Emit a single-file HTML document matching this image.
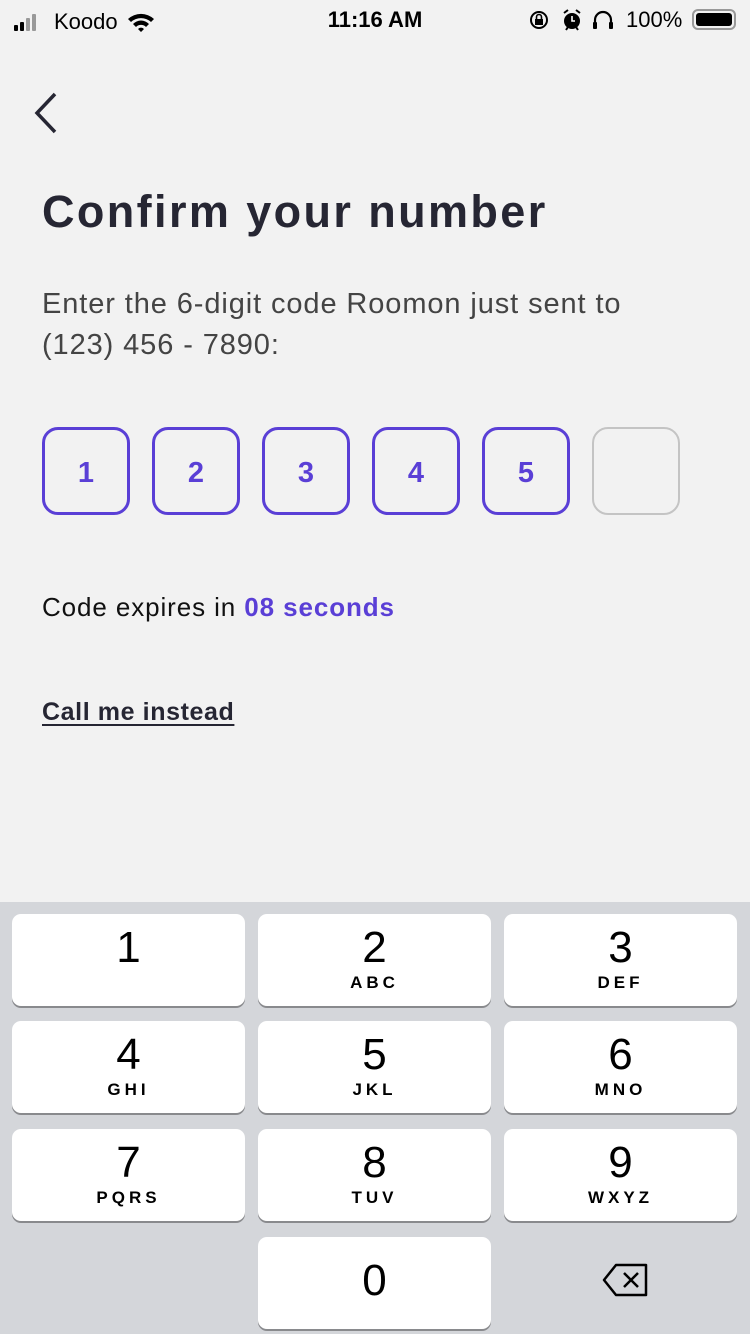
<!DOCTYPE html>
<html><head><meta charset="utf-8"><style>
*{margin:0;padding:0;box-sizing:border-box}
body{width:750px;height:1334px;background:#f2f2f2;font-family:"Liberation Sans",sans-serif;position:relative;overflow:hidden;color:#262633}
.a{position:absolute}
.box{position:absolute;top:427px;width:88px;height:88px;border:3px solid #5a3fd6;border-radius:16px;color:#5a3fd6;font-weight:bold;font-size:29px;text-align:center;line-height:86px}
.kb{position:absolute;left:0;top:902px;width:750px;height:432px;background:#d4d6da}
.k{position:absolute;width:233px;height:92px;background:#fff;border-radius:9px;box-shadow:0 2px 0 #898a8d;text-align:center;color:#000}
.k .n{font-size:44px;line-height:44px;margin-top:12px;display:block}
.k .l{font-size:17px;font-weight:bold;letter-spacing:4px;display:block;margin-top:3px}
</style></head><body>
<div class="a" style="left:14px;top:9px;font-size:22px;color:#000;display:flex;align-items:center">
<svg width="36" height="18"><rect x="0" y="12" width="4" height="6" rx="1" fill="#000"/><rect x="6" y="9" width="4" height="9" rx="1" fill="#000"/><rect x="12" y="5" width="4" height="13" rx="1" fill="#999"/><rect x="18" y="1" width="4" height="17" rx="1" fill="#999"/></svg>
<span style="margin-left:4px">Koodo</span>
<svg width="30" height="22" style="margin-left:8px" viewBox="0 0 30 22"><path d="M2 8a19 19 0 0 1 26 0l-3 3a15 15 0 0 0-20 0z M7 13a11 11 0 0 1 16 0l-3 3a7 7 0 0 0-10 0z M12 18a4 4 0 0 1 6 0l-3 3z" fill="#000"/></svg>
</div>
<div class="a" style="left:0;width:750px;top:7px;text-align:center;font-size:22px;font-weight:bold;color:#000">11:16 AM</div>
<svg class="a" style="left:528px;top:8px" width="100" height="24" viewBox="0 0 100 24">
<circle cx="11" cy="12" r="8" stroke="#000" stroke-width="2" fill="none"/><rect x="7" y="11" width="8" height="6" fill="#000"/><path d="M8.5 11v-2a2.5 2.5 0 0 1 5 0v2" stroke="#000" stroke-width="1.6" fill="none"/>
<circle cx="44" cy="13" r="8" fill="#000"/><path d="M36 5l4-3M52 5l-4-3M38 22l2-3M50 22l-2-3" stroke="#000" stroke-width="2"/><path d="M44 8v5h3" stroke="#fff" stroke-width="1.6" fill="none"/>
<path d="M67 20v-8a8 8 0 0 1 16 0v8" stroke="#000" stroke-width="2.2" fill="none"/><rect x="65" y="14" width="4" height="7" rx="1" fill="#000"/><rect x="81" y="14" width="4" height="7" rx="1" fill="#000"/>
</svg>
<div class="a" style="left:626px;top:7px;font-size:22px;color:#000">100%</div>
<div class="a" style="left:692px;top:9px;width:44px;height:21px;border:2px solid #999;border-radius:6px;padding:2px"><div style="background:#000;height:100%;border-radius:3px"></div></div>
<svg class="a" style="left:30px;top:92px" width="30" height="42"><path d="M25 2L7 21l18 19" stroke="#262633" stroke-width="3.5" fill="none"/></svg>
<div class="a" style="left:42px;top:186px;font-size:45px;font-weight:900;letter-spacing:2.4px">Confirm your number</div>
<div class="a" style="left:42px;top:284px;font-size:29px;line-height:41px;color:#444;letter-spacing:0.9px">Enter the 6-digit code Roomon just sent to<br>(123) 456 - 7890:</div>
<div class="box" style="left:42px">1</div><div class="box" style="left:152px">2</div><div class="box" style="left:262px">3</div><div class="box" style="left:372px">4</div><div class="box" style="left:482px">5</div>
<div class="box" style="left:592px;border:2px solid #c4c4c4"></div>
<div class="a" style="left:42px;top:592px;font-size:26px;color:#111;letter-spacing:0.9px">Code expires in <b style="color:#5a3fd6">08 seconds</b></div>
<div class="a" style="left:42px;top:698px;font-size:25px;font-weight:bold;text-decoration:underline;text-underline-offset:4px;letter-spacing:0.6px">Call me instead</div>
<div class="kb"></div>
<div class="k" style="left:12px;top:914px"><span class="n">1</span></div>
<div class="k" style="left:258px;top:914px"><span class="n">2</span><span class="l">ABC</span></div>
<div class="k" style="left:504px;top:914px"><span class="n">3</span><span class="l">DEF</span></div>
<div class="k" style="left:12px;top:1021px"><span class="n">4</span><span class="l">GHI</span></div>
<div class="k" style="left:258px;top:1021px"><span class="n">5</span><span class="l">JKL</span></div>
<div class="k" style="left:504px;top:1021px"><span class="n">6</span><span class="l">MNO</span></div>
<div class="k" style="left:12px;top:1129px"><span class="n">7</span><span class="l">PQRS</span></div>
<div class="k" style="left:258px;top:1129px"><span class="n">8</span><span class="l">TUV</span></div>
<div class="k" style="left:504px;top:1129px"><span class="n">9</span><span class="l">WXYZ</span></div>
<div class="k" style="left:258px;top:1237px"><span class="n" style="margin-top:22px">0</span></div>
<svg class="a" style="left:602px;top:1263px" width="48" height="34"><path d="M14 2h30v30H14L2 17z" stroke="#000" stroke-width="2.5" fill="none" stroke-linejoin="round"/><path d="M22 10l14 14M36 10L22 24" stroke="#000" stroke-width="2.5"/></svg>
</body></html>
